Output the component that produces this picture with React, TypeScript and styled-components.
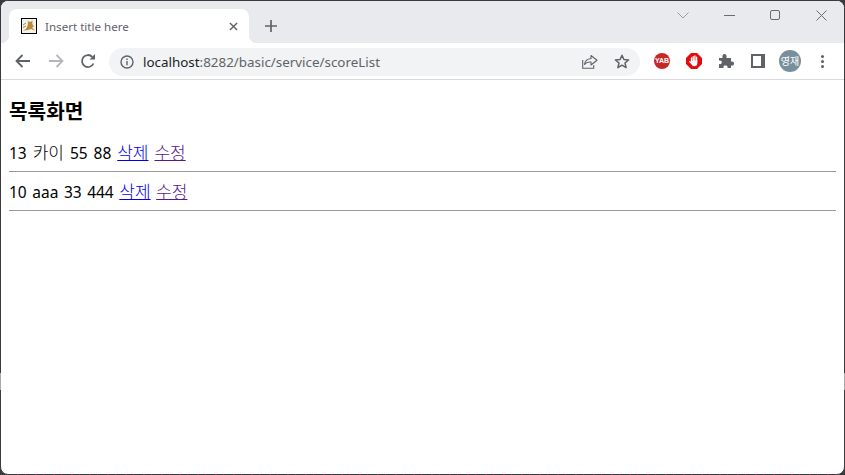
import React from 'react';
import styled, { createGlobalStyle } from 'styled-components';

const GlobalStyle = createGlobalStyle`
  html, body {
    margin: 0;
    height: 100%;
    background: #3a3a3c;
  }
  #root {
    height: 100%;
  }
`;

const App: React.FC = () => {
  return (
    <Frame>
      <GlobalStyle />
      <Window>
        <TitleBar>
          <Tab>
            <Favicon viewBox="0 0 16 16">
              <rect x="0.5" y="0.5" width="15" height="15" fill="#f4f1e6" stroke="#000" />
              <path d="M2 12.500l3-1.500 1.500-3L7 4.500l-.5-2L8 3.700h2l1.500-1.200L11.300 6 13 8.500l-2 1 3 3-4-1.500-3 1z" fill="#b98a3a" />
              <path d="M2 7l3-2M2 9.500l3-1.500" stroke="#8a8a8a" strokeWidth="1" />
            </Favicon>
            <TabTitle>Insert title here</TabTitle>
            <TabClose viewBox="0 0 10 10">
              <path d="M1 1l8 8M9 1l-8 8" stroke="#5f6368" strokeWidth="1.600" fill="none" />
            </TabClose>
          </Tab>
          <NewTab viewBox="0 0 12 12">
            <path d="M6 0v12M0 6h12" stroke="#5f6368" strokeWidth="1.700" fill="none" />
          </NewTab>
          <WindowControls>
            <ControlSlot>
              <svg width="12" height="7" viewBox="0 0 12 7">
                <path d="M.5.500L6 6 11.500.500" stroke="#9a9ca0" fill="none" />
              </svg>
            </ControlSlot>
            <ControlSlot>
              <svg width="11" height="1" viewBox="0 0 11 1">
                <path d="M0 .5h11" stroke="#6a6c70" fill="none" />
              </svg>
            </ControlSlot>
            <ControlSlot>
              <svg width="10" height="10" viewBox="0 0 10 10">
                <rect x=".5" y=".5" width="9" height="9" rx="1.500" stroke="#6a6c70" fill="none" />
              </svg>
            </ControlSlot>
            <ControlSlot>
              <svg width="11" height="11" viewBox="0 0 11 11">
                <path d="M.5.500l10 10M10.500.500l-10 10" stroke="#6a6c70" fill="none" />
              </svg>
            </ControlSlot>
          </WindowControls>
        </TitleBar>

        <Toolbar>
          <ToolButton $width={32}>
            <svg width="16" height="14" viewBox="0 0 16 14">
              <path d="M15 7H2M7.500 1L1.500 7l6 6" stroke="#5f6368" strokeWidth="1.800" fill="none" />
            </svg>
          </ToolButton>
          <ToolButton $width={33}>
            <svg width="16" height="14" viewBox="0 0 16 14">
              <path d="M1 7h13M8.500 1l6 6-6 6" stroke="#b4b6b9" strokeWidth="1.800" fill="none" />
            </svg>
          </ToolButton>
          <ToolButton $width={31}>
            <svg width="16" height="16" viewBox="0 0 16 16">
              <path d="M13.500 10.500A6 6 0 1 1 12.300 3.800" stroke="#5f6368" strokeWidth="1.800" fill="none" />
              <path d="M9.500 6.500H15V1z" fill="#5f6368" />
            </svg>
          </ToolButton>
          <Omnibox>
            <InfoIcon viewBox="0 0 14 14">
              <circle cx="7" cy="7" r="6" stroke="#5f6368" strokeWidth="1.400" fill="none" />
              <path d="M7 6v4.200M7 3.600v1.400" stroke="#5f6368" strokeWidth="1.400" />
            </InfoIcon>
            <Url>
              localhost<UrlRest>:8282/basic/service/scoreList</UrlRest>
            </Url>
            <OmniboxActions>
              <svg width="16" height="15" viewBox="0 0 16 15">
                <path d="M9 1.500v3C4.500 5 2.800 7.500 2.500 10.500 4 8.500 6 7.800 9 8v3l6-4.800z" stroke="#5f6368" strokeWidth="1.100" fill="none" strokeLinejoin="round" />
                <path d="M.7 6v8.300h11V11" stroke="#5f6368" strokeWidth="1.100" fill="none" />
              </svg>
              <svg width="16" height="15" viewBox="0 0 16 15">
                <path d="M8 1.200l1.900 4.300 4.700.4-3.600 3.100 1.100 4.600L8 11.200l-4.100 2.400L5 9 1.400 5.900l4.700-.4z" stroke="#5f6368" strokeWidth="1.500" fill="none" strokeLinejoin="round" />
              </svg>
            </OmniboxActions>
          </Omnibox>
          <Extensions>
            <ExtensionSlot>
              <YabBadge>YAB</YabBadge>
            </ExtensionSlot>
            <ExtensionSlot>
              <svg width="16" height="16" viewBox="0 0 16 16">
                <path d="M5 0h6l5 5v6l-5 5H5l-5-5V5z" fill="#e30c0c" />
                <path d="M5.500 9V5M7.200 8V3.600M8.900 8V3M10.600 8.500V4.200" stroke="#fff" strokeWidth="1.300" strokeLinecap="round" />
                <path d="M4.900 7.500h6.400v3.200c0 1.600-1.200 2.500-3 2.500-1.500 0-2.300-.7-2.900-1.900L3.200 8.900c-.4-.8.500-1.300 1.100-.7l.6.700z" fill="#fff" />
              </svg>
            </ExtensionSlot>
            <ExtensionSlot>
              <svg width="16" height="16" viewBox="0 0 16 16">
                <path d="M1 5h3.500C4 2.500 5 1 6.500 1S9 2.500 8.500 5H13v3.500c2.500-.5 3 .8 3 2s-.5 2.500-3 2V15H9.500c.5-2-.8-2.500-2-2.500s-2.500.5-2 2.500H1v-4c2 .5 2.800-.5 2.800-1.700S3 7.200 1 7.700z" fill="#5f6368" />
              </svg>
            </ExtensionSlot>
            <ExtensionSlot>
              <PanelIcon />
            </ExtensionSlot>
            <ExtensionSlot>
              <Avatar>영재</Avatar>
            </ExtensionSlot>
            <ExtensionSlot>
              <MenuDots>
                <i />
                <i />
                <i />
              </MenuDots>
            </ExtensionSlot>
          </Extensions>
        </Toolbar>

        <Page>
          <Heading>목록화면</Heading>
          <ScoreRow $wordGap={1.9}>
            13 <Hangul>카이</Hangul> 55 88 <a href="#delete"><Hangul>삭제</Hangul></a>{' '}
            <Visited href="#edit"><Hangul>수정</Hangul></Visited>
          </ScoreRow>
          <Rule />
          <ScoreRow $wordGap={1.5}>
            10 aaa 33 444 <a href="#delete"><Hangul>삭제</Hangul></a>{' '}
            <Visited href="#edit"><Hangul>수정</Hangul></Visited>
          </ScoreRow>
          <Rule />
        </Page>
      </Window>
      <EdgeGlint $side="left" />
      <EdgeGlint $side="right" />
      <BottomSpeckle />
    </Frame>
  );
};

export default App;

const Frame = styled.div`
  position: relative;
  height: 100%;
`;

const Window = styled.div`
  height: 100%;
  box-sizing: border-box;
  border: 1px solid #3a3a3c;
  border-radius: 8px;
  overflow: hidden;
  background: #fff;
  display: flex;
  flex-direction: column;
`;

const EdgeGlint = styled.div<{ $side: 'left' | 'right' }>`
  position: absolute;
  top: 373px;
  ${(p) => p.$side}: 0;
  width: 1px;
  height: 17px;
  background: #a9a9a9;
`;

const BottomSpeckle = styled.div`
  position: absolute;
  left: 8px;
  right: 8px;
  bottom: 0;
  height: 1px;
  background: repeating-linear-gradient(90deg, #3a3a3c 0 9px, #8a3a55 9px 11px, #3a3a3c 11px 17px, #a03560 17px 18px);
`;

const TitleBar = styled.div`
  height: 42px;
  flex: none;
  background: #e8eaed;
  display: flex;
  align-items: flex-end;
  padding-left: 8px;
`;

const Tab = styled.div`
  position: relative;
  width: 240px;
  height: 34px;
  box-sizing: border-box;
  background: #fff;
  border-radius: 8px 8px 0 0;
  display: flex;
  align-items: center;
  padding: 0 11px 0 12px;

  &:before,
  &:after {
    content: '';
    position: absolute;
    bottom: 0;
    width: 8px;
    height: 8px;
  }

  &:before {
    left: -8px;
    background: radial-gradient(circle at 0 0, #e8eaed 8px, #fff 8.5px);
  }

  &:after {
    right: -8px;
    background: radial-gradient(circle at 100% 0, #e8eaed 8px, #fff 8.5px);
  }
`;

const Favicon = styled.svg`
  width: 16px;
  height: 16px;
  flex: none;
`;

const TabTitle = styled.span`
  flex: 1;
  margin-left: 8px;
  font: 11.600px 'Noto Sans', sans-serif;
  color: #5f6368;
`;

const TabClose = styled.svg`
  width: 9px;
  height: 9px;
  flex: none;
`;

const NewTab = styled.svg`
  width: 12px;
  height: 12px;
  margin: 0 0 11px 16px;
  flex: none;
`;

const WindowControls = styled.div`
  margin-left: auto;
  align-self: flex-start;
  display: flex;
`;

const ControlSlot = styled.div`
  width: 46px;
  height: 28px;
  display: flex;
  align-items: center;
  justify-content: center;
`;

const Toolbar = styled.div`
  height: 36px;
  flex: none;
  background: #fff;
  border-bottom: 1px solid #d9dadc;
  display: flex;
  align-items: center;
  padding-left: 6px;
`;

const ToolButton = styled.div<{ $width: number }>`
  width: ${(p) => p.$width}px;
  height: 28px;
  flex: none;
  display: flex;
  align-items: center;
  justify-content: center;
`;

const Omnibox = styled.div`
  width: 531px;
  height: 28px;
  margin: 1px 0 0 6px;
  flex: none;
  box-sizing: border-box;
  background: #f1f3f4;
  border-radius: 14px;
  display: flex;
  align-items: center;
  padding: 0 10px 0 11px;
`;

const InfoIcon = styled.svg`
  width: 14px;
  height: 14px;
  flex: none;
`;

const Url = styled.span`
  margin-left: 9px;
  font: 13.400px 'Noto Sans', sans-serif;
  color: #202124;
`;

const UrlRest = styled.span`
  color: #5f6368;
`;

const OmniboxActions = styled.div`
  margin-left: auto;
  display: flex;
  align-items: center;
  gap: 16px;
`;

const Extensions = styled.div`
  margin-left: 6px;
  display: flex;
  align-items: center;
`;

const ExtensionSlot = styled.div`
  width: 32px;
  height: 28px;
  display: flex;
  align-items: center;
  justify-content: center;
`;

const YabBadge = styled.div`
  width: 16px;
  height: 16px;
  border-radius: 50%;
  background: #c62828;
  color: #fff;
  font: bold 7px/16px 'Liberation Sans', sans-serif;
  text-align: center;
`;

const PanelIcon = styled.div`
  width: 8px;
  height: 10px;
  border: solid #5f6368;
  border-width: 2px 4px 2px 2px;
  background: #fff;
`;

const Avatar = styled.div`
  width: 22px;
  height: 22px;
  border-radius: 50%;
  background: #78909c;
  color: #fff;
  font: 10px/22px 'Noto Sans CJK KR', sans-serif;
  text-align: center;
`;

const MenuDots = styled.div`
  display: flex;
  flex-direction: column;
  gap: 2px;

  i {
    display: block;
    width: 3px;
    height: 3px;
    border-radius: 50%;
    background: #5f6368;
  }
`;

const Page = styled.div`
  flex: 1;
  padding: 0 8px;
  font: 15.500px 'Noto Sans', 'Noto Sans CJK KR', sans-serif;
  color: #000;

  a {
    color: #0000ee;
  }
`;

const Heading = styled.h3`
  margin: 18px 0 19px;
  font: bold 20.200px/25px 'Noto Sans CJK KR', sans-serif;
`;

const ScoreRow = styled.div<{ $wordGap: number }>`
  height: 22px;
  line-height: 22px;
  word-spacing: ${(p) => p.$wordGap}px;
`;

const Hangul = styled.span`
  font-family: 'Noto Sans CJK KR', sans-serif;
  font-size: 17px;
  font-weight: 300;
  line-height: 1;
`;

const Visited = styled.a`
  && {
    color: #551a8b;
  }
`;

const Rule = styled.hr`
  margin: 7px 0 9px;
  border: none;
  height: 1px;
  background: #9a9a9a;
`;
